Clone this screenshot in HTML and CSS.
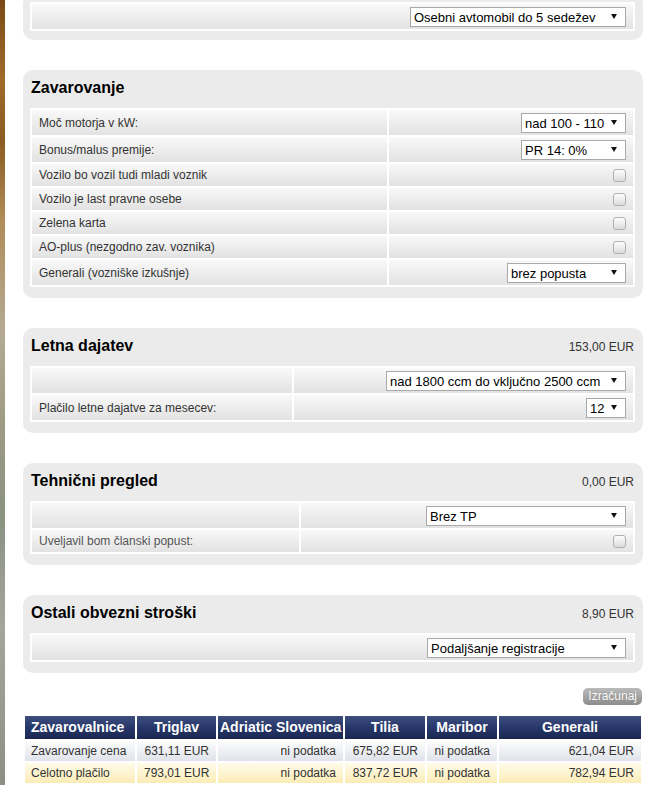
FILE: index.html
```html
<!DOCTYPE html>
<html lang="sl">
<head>
    <meta charset="UTF-8">
    <meta name="viewport" content="width=device-width, initial-scale=1.0">
    <title>Stroški vozila</title>
    <link rel="stylesheet" href="styles.css">
</head>
<body>
    <div class="page">
        <div class="panel panel-cut">
            <table class="form">
                <tr>
                    <td>
                        <div class="ctl">
                            <span class="sel sel-vozilo"><select><option>Osebni avtomobil do 5 sedežev</option></select></span>
                        </div>
                    </td>
                </tr>
            </table>
        </div>

        <div class="panel">
            <div class="panel-head">
                <h2>Zavarovanje</h2>
            </div>
            <table class="form">
                <tr>
                    <td class="lbl lbl-zav">Moč motorja v kW:</td>
                    <td><div class="ctl"><span class="sel sel-kw"><select><option>nad 100 - 110</option></select></span></div></td>
                </tr>
                <tr>
                    <td class="lbl">Bonus/malus premije:</td>
                    <td><div class="ctl"><span class="sel sel-kw"><select><option>PR 14: 0%</option></select></span></div></td>
                </tr>
                <tr>
                    <td class="lbl">Vozilo bo vozil tudi mladi voznik</td>
                    <td><div class="ctl"><input type="checkbox" class="chk"></div></td>
                </tr>
                <tr>
                    <td class="lbl">Vozilo je last pravne osebe</td>
                    <td><div class="ctl"><input type="checkbox" class="chk"></div></td>
                </tr>
                <tr>
                    <td class="lbl">Zelena karta</td>
                    <td><div class="ctl"><input type="checkbox" class="chk"></div></td>
                </tr>
                <tr>
                    <td class="lbl">AO-plus (nezgodno zav. voznika)</td>
                    <td><div class="ctl"><input type="checkbox" class="chk"></div></td>
                </tr>
                <tr>
                    <td class="lbl">Generali (vozniške izkušnje)</td>
                    <td><div class="ctl"><span class="sel sel-popust"><select><option>brez popusta</option></select></span></div></td>
                </tr>
            </table>
        </div>

        <div class="panel">
            <div class="panel-head">
                <h2>Letna dajatev</h2>
                <span class="amount">153,00 EUR</span>
            </div>
            <table class="form">
                <tr>
                    <td class="lbl lbl-letna"></td>
                    <td><div class="ctl"><span class="sel sel-ccm"><select><option>nad 1800 ccm do vključno 2500 ccm</option></select></span></div></td>
                </tr>
                <tr>
                    <td class="lbl">Plačilo letne dajatve za mesecev:</td>
                    <td><div class="ctl"><span class="sel sel-mesec"><select><option>12</option></select></span></div></td>
                </tr>
            </table>
        </div>

        <div class="panel">
            <div class="panel-head">
                <h2>Tehnični pregled</h2>
                <span class="amount">0,00 EUR</span>
            </div>
            <table class="form">
                <tr>
                    <td class="lbl lbl-tp"></td>
                    <td><div class="ctl"><span class="sel sel-tp"><select><option>Brez TP</option></select></span></div></td>
                </tr>
                <tr>
                    <td class="lbl lbl-soft">Uveljavil bom članski popust:</td>
                    <td><div class="ctl"><input type="checkbox" class="chk"></div></td>
                </tr>
            </table>
        </div>

        <div class="panel panel-last">
            <div class="panel-head">
                <h2>Ostali obvezni stroški</h2>
                <span class="amount">8,90 EUR</span>
            </div>
            <table class="form">
                <tr>
                    <td>
                        <div class="ctl">
                            <span class="sel sel-reg"><select><option>Podaljšanje registracije</option></select></span>
                        </div>
                    </td>
                </tr>
            </table>
        </div>

        <div class="actions">
            <button class="btn">Izračunaj</button>
        </div>

        <table class="results">
            <tr>
                <th class="c-name">Zavarovalnice</th>
                <th class="c-triglav">Triglav</th>
                <th class="c-adriatic">Adriatic Slovenica</th>
                <th class="c-tilia">Tilia</th>
                <th class="c-maribor">Maribor</th>
                <th class="c-generali">Generali</th>
            </tr>
            <tr class="r-price">
                <td>Zavarovanje cena</td>
                <td>631,11 EUR</td>
                <td>ni podatka</td>
                <td>675,82 EUR</td>
                <td>ni podatka</td>
                <td>621,04 EUR</td>
            </tr>
            <tr class="r-total">
                <td>Celotno plačilo</td>
                <td>793,01 EUR</td>
                <td>ni podatka</td>
                <td>837,72 EUR</td>
                <td>ni podatka</td>
                <td>782,94 EUR</td>
            </tr>
        </table>
    </div>
</body>
</html>
```

FILE: styles.css
```css
body {
    margin: 0;
    font-family: "Liberation Sans", Arial, sans-serif;
    font-size: 12px;
    color: #333;
    background: linear-gradient(to bottom, #7a4a16 0%, #a06a2a 10%, #8c5c22 18%, #b08c58 28%, #b4aa92 42%, #9c9a84 55%, #8a9282 66%, #a4a69c 80%, #8e8e86 100%) 0 0 / 5px 100% no-repeat, #fff;
}

.page {
    margin: 0 9px 0 23px;
}

/* grey boxes */
.panel {
    background: #ebebeb;
    border-radius: 10px;
    padding: 8px 8px 11px 7px;
    margin-bottom: 30px;
}
.panel-cut {
    margin-top: -6px;
    padding-bottom: 9px;
}
.panel-last {
    margin-bottom: 15px;
}

.panel-head {
    display: flex;
    justify-content: space-between;
    align-items: baseline;
    margin-bottom: 10px;
}
.panel-head h2 {
    margin: 0;
    padding-left: 1px;
    font-size: 16px;
    line-height: 20px;
    color: #000;
}
.amount {
    font-size: 12px;
    color: #333;
    padding-right: 1px;
}

/* form rows */
.form {
    width: 100%;
    table-layout: fixed;
    border-collapse: separate;
    border-spacing: 2px;
    background: #fff;
}
.form td {
    box-sizing: border-box;
    height: 22px;
    padding: 2px 7px;
    line-height: 18px;
    vertical-align: middle;
    background: linear-gradient(to bottom, #f9f9f9 0%, #ececec 55%, #e2e2e2 100%);
}
.lbl-zav { width: 355px; }
.lbl-letna { width: 260px; }
.lbl-tp { width: 267px; }
.lbl-soft { color: #555; }

.ctl {
    display: flex;
    justify-content: flex-end;
    align-items: center;
    min-height: 18px;
}

.sel {
    position: relative;
    display: block;
    padding-top: 1px;
}
.sel select {
    -webkit-appearance: none;
    appearance: none;
    box-sizing: border-box;
    display: block;
    width: 100%;
    height: 20px;
    margin: 0;
    padding: 0 18px 0 3px;
    border: 1px solid #a9a9a9;
    border-radius: 0;
    background: #fff;
    font: 13px "Liberation Sans", Arial, sans-serif;
    color: #000;
}
.sel::after {
    content: "";
    position: absolute;
    right: 9px;
    top: 8px;
    border-left: 3px solid transparent;
    border-right: 3px solid transparent;
    border-top: 5px solid #111;
    pointer-events: none;
}
.sel-vozilo { width: 216px; }
.sel-kw { width: 105px; }
.sel-popust { width: 119px; }
.sel-ccm { width: 240px; }
.sel-mesec { width: 40px; }
.sel-tp { width: 200px; }
.sel-reg { width: 199px; }

.chk {
    -webkit-appearance: none;
    appearance: none;
    width: 13px;
    height: 13px;
    margin: 0;
    border: 1px solid #b0b0b0;
    border-radius: 3px;
    background: linear-gradient(to bottom, #fdfdfd, #dcdcdc);
}

/* calculate + results */
.actions {
    display: flex;
    justify-content: flex-end;
    margin-bottom: 9px;
    padding-right: 1px;
}
.btn {
    height: 17px;
    padding: 0 5px;
    border: 0;
    border-radius: 5px;
    background: linear-gradient(to bottom, #bababa, #8c8c8c);
    color: #fff;
    font: 12px/17px "Liberation Sans", Arial, sans-serif;
    text-shadow: 0 0 1px rgba(0, 0, 0, 0.25);
}

.results {
    width: 100%;
    table-layout: fixed;
    border-collapse: separate;
    border-spacing: 2px;
}
.results th {
    box-sizing: border-box;
    padding: 3px 2px;
    font-size: 14px;
    line-height: 17px;
    color: #fff;
    white-space: nowrap;
    background: linear-gradient(to bottom, #3e4f7f 0%, #27376a 50%, #1a2750 100%);
}
.results th.c-name {
    text-align: left;
    padding-left: 6px;
}
.c-name { width: 110px; }
.c-triglav { width: 79px; }
.c-adriatic { width: 125px; }
.c-tilia { width: 80px; }
.c-maribor { width: 70px; }
.c-generali { width: 142px; }

.results td {
    padding: 2px 7px;
    line-height: 16px;
    text-align: right;
    color: #333;
    white-space: nowrap;
}
.results td:first-child {
    text-align: left;
    padding-left: 6px;
}
.r-price td {
    background: linear-gradient(to bottom, #fdfdfd, #dfe2e9);
}
.r-total td {
    background: linear-gradient(to bottom, #fffbea, #fbecb6);
}
```
